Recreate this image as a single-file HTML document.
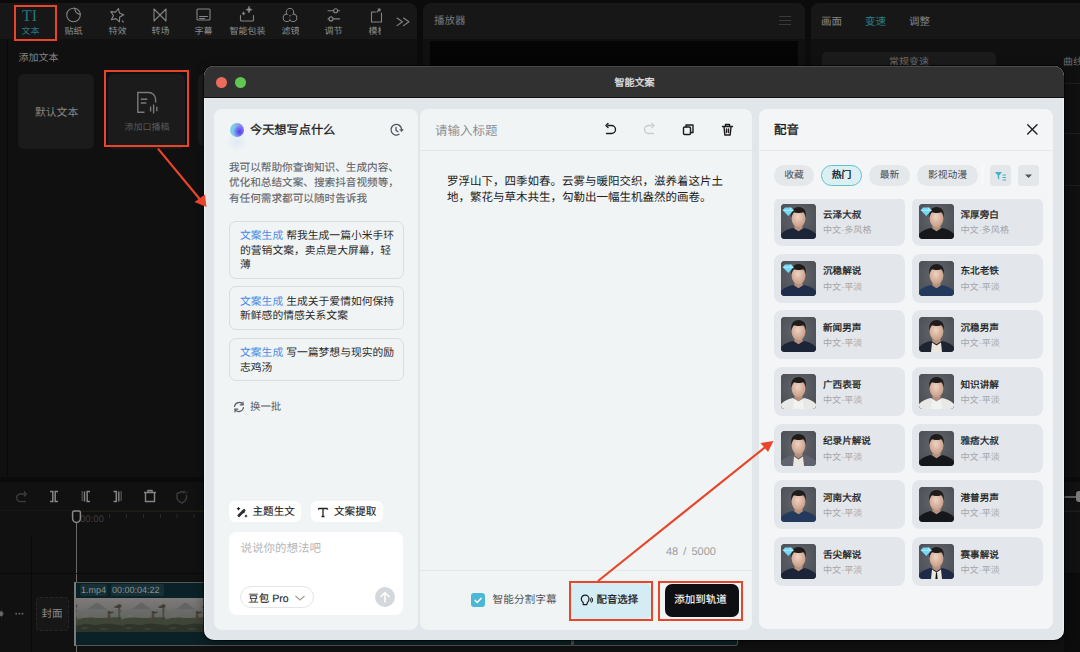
<!DOCTYPE html>
<html lang="zh-CN"><head><meta charset="utf-8">
<style>
*{margin:0;padding:0;box-sizing:border-box}
html,body{width:1080px;height:652px;overflow:hidden;background:#0b0b0b;font-family:"Liberation Sans",sans-serif;text-rendering:geometricPrecision}
.a{position:absolute}
.t{position:absolute;white-space:nowrap;line-height:1}
/* dark app */
.pnl{position:absolute;background:#161616;border-radius:8px}
.tb{color:#8e8e8e;font-size:9px;margin-top:.8px;margin-left:.5px}
.rb{position:absolute;border:2px solid #e8452a}
/* modal */
#modal{position:absolute;left:204px;top:66px;width:860px;height:574px;border-radius:10px;background:#e2e7ea;overflow:hidden}
#tbar{position:absolute;left:0;top:0;width:860px;height:31px;background:#313131;border-bottom:1px solid #141414}
.card{position:absolute;background:#f1f4f5;border-radius:8px}
.sug{position:absolute;left:228.5px;width:175px;border:1px solid #dadde1;border-radius:7px;font-size:10.8px;line-height:14.5px;color:#2a2a2a;padding:7.8px 0 0 10.5px}
.sug b{font-weight:normal;color:#4a8ce4}
.pill{position:absolute;height:21px;border-radius:11px;background:#e5e8eb;font-size:9.8px;color:#474c55;text-align:center;line-height:21px}
.vc{position:absolute;width:131px;height:49px;border-radius:8px;background:#e3e7eb}
.av{position:absolute;left:7px;top:7px;width:35px;height:35px;border-radius:4px;background:#4a4f58;overflow:hidden}
.vn{position:absolute;left:49px;top:12.5px;font-size:9.6px;color:#1a1a1a;-webkit-text-stroke:.28px #1a1a1a;white-space:nowrap;line-height:12px}
.vs{position:absolute;left:49px;top:27px;font-size:9.1px;color:#a3a6aa;white-space:nowrap;line-height:12px}
</style></head><body>
<!-- ============ DARK APP BACKGROUND ============ -->
<!-- left top panel -->
<div class="a" style="left:0;top:3px;width:417px;height:474px;border-radius:0 8px 8px 0;background:#101010"></div>
<div class="a" style="left:0;top:3px;width:417px;height:37px;background:#171717;border-radius:0 8px 0 0;border-bottom:1px solid #101010"></div>
<div class="a" style="left:7px;top:40px;width:1px;height:436px;background:#090909"></div>
<!-- toolbar -->
<svg class="a" style="left:0;top:0" width="417" height="40" fill="none" stroke-linecap="round" stroke-linejoin="round">
  <text x="22" y="20.5" font-family="Liberation Serif" font-size="16.5" fill="#24767d" stroke="none" textLength="15" lengthAdjust="spacingAndGlyphs">TI</text>
  <g stroke="#858585" stroke-width="1.1">
    <path d="M80.27 14.41A6.8 6.8 0 1 1 74.68 8.30"/><path d="M74.68 8.30C74.98 11.80 76.77 14.11 80.27 14.41"/><path d="M74.68 8.30C77.68 8.80 80.27 11.41 80.27 14.41"/>
    <path d="M118.49 8.51L119.40 13.11L123.78 14.81L119.68 17.10L119.42 21.79L115.98 18.60L111.44 19.80L113.41 15.54L110.86 11.59L115.53 12.15z" stroke-linejoin="round"/><path d="M122.2 20.8l1.2 1.2"/>
    <path d="M154 9v12l6-6zM166 9v12l-6-6z"/>
    <rect x="197" y="9" width="13" height="11" rx="1"/><path d="M199.5 16.5h8M199.5 18.5h5"/>
    <path d="M240.5 15.5v4.5a1 1 0 0 0 1 1h11a1 1 0 0 0 1-1v-4.5"/><path d="M249 6.5l.9 2.3 2.3.9-2.3.9-.9 2.3-.9-2.3-2.3-.9 2.3-.9z" fill="#8f8f8f" stroke-width=".6"/><path d="M243.5 11.8l.5 1.2 1.2.5-1.2.5-.5 1.2-.5-1.2-1.2-.5 1.2-.5z" fill="#8f8f8f" stroke-width=".5"/>
    <circle cx="290" cy="12.2" r="3.7"/><circle cx="286.9" cy="17.8" r="3.7"/><circle cx="293.1" cy="17.8" r="3.7"/><g fill="#171717" stroke="none"><circle cx="290" cy="12.2" r="3.1"/><circle cx="286.9" cy="17.8" r="3.1"/><circle cx="293.1" cy="17.8" r="3.1"/></g>
    <path d="M328 10.7h11.5M328 18.9h11.5"/><circle cx="335.6" cy="10.7" r="2" fill="#171717"/><circle cx="331" cy="18.9" r="2" fill="#171717"/>
    <path d="M371.5 12v10h10V13M371.5 12h4M377 12l3-3M378 9h2v2"/>
    <path d="M397 18l5.5 3.8-5.5 3.8M403.5 18l5.5 3.8-5.5 3.8"/>
  </g>
</svg>
<div class="t tb" style="left:21px;top:26px;color:#287a81">文本</div>
<div class="t tb" style="left:64px;top:26px">贴纸</div>
<div class="t tb" style="left:108px;top:26px">特效</div>
<div class="t tb" style="left:151px;top:26px">转场</div>
<div class="t tb" style="left:194px;top:26px">字幕</div>
<div class="t tb" style="left:229px;top:26px">智能包装</div>
<div class="t tb" style="left:281px;top:26px">滤镜</div>
<div class="t tb" style="left:324px;top:26px">调节</div>
<div class="a" style="left:368px;top:0;width:13px;height:39px;overflow:hidden"><div class="t tb" style="left:0;top:26px">模板</div></div>
<div class="rb" style="left:14px;top:5px;width:43px;height:36px"></div>
<div class="t" style="left:18.5px;top:54.4px;font-size:10px;color:#858585">添加文本</div>
<div class="a" style="left:18px;top:74px;width:76px;height:75px;background:#1b1b1b;border-radius:6px"></div>
<div class="t" style="left:35px;top:107.6px;font-size:10.8px;color:#858585">默认文本</div>
<div class="a" style="left:108px;top:74px;width:77px;height:75px;background:#1b1b1b;border-radius:6px"></div>
<svg class="a" style="left:136px;top:91px" width="24" height="24" fill="none" stroke="#7a7a7a" stroke-width="1.4"><path d="M8.5 21.2H1.8V1.5h11c3.6 0 6.8 3.2 6.8 6.8V11.5"/><path d="M4.8 8.2h6.5M4.8 12h5.5"/><path d="M14.6 15.5v5M17.6 13.5v9M20.8 15.8v4.4"/></svg>
<div class="t" style="left:124.5px;top:122.5px;font-size:9px;color:#5a5a5a">添加口播稿</div>
<div class="rb" style="left:104px;top:70px;width:85px;height:77px"></div>
<div class="a" style="left:198px;top:74px;width:10px;height:72px;background:#1b1b1b;border-radius:6px 0 0 6px"></div>

<!-- player panel -->
<div class="a" style="left:423px;top:3px;width:382px;height:474px;background:#101010;border-radius:8px"></div>
<div class="a" style="left:423px;top:3px;width:382px;height:37px;background:#171717;border-radius:8px 8px 0 0;border-bottom:1px solid #101010"></div>
<div class="t" style="left:434px;top:16.3px;font-size:10.5px;color:#777">播放器</div>
<svg class="a" style="left:778px;top:15px" width="14" height="11" stroke="#3a3a3a" stroke-width="1.2"><path d="M1 1.5h12M1 5.5h12M1 9.5h12"/></svg>
<div class="a" style="left:430px;top:41px;width:368px;height:436px;background:#050505"></div>

<!-- right panel -->
<div class="a" style="left:811px;top:3px;width:275px;height:474px;background:#101010;border-radius:8px 0 0 8px"></div>
<div class="a" style="left:811px;top:3px;width:275px;height:37px;background:#171717;border-radius:8px 0 0 0;border-bottom:1px solid #101010"></div>
<div class="t" style="left:821px;top:16.5px;font-size:10.5px;color:#858585">画面</div>
<div class="t" style="left:865px;top:16.5px;font-size:10.5px;color:#2a8088">变速</div>
<div class="t" style="left:909px;top:16.5px;font-size:10.5px;color:#858585">调整</div>
<div class="a" style="left:822px;top:52px;width:174px;height:30px;background:#1b1b1b;border-radius:5px"></div>
<div class="t" style="left:889px;top:58.3px;font-size:10px;color:#6a6a6a">常规变速</div>
<div class="t" style="left:1063px;top:58.3px;font-size:10px;color:#6a6a6a">曲线</div>
<div class="a" style="left:1000px;top:83px;width:80px;height:1px;background:#1e1e1e"></div>
<div class="a" style="left:1000px;top:132.5px;width:80px;height:1px;background:#1e1e1e"></div><div class="a" style="left:1000px;top:184.5px;width:80px;height:1px;background:#1c1c1c"></div>

<!-- timeline -->
<div class="a" style="left:0;top:482px;width:1080px;height:170px;background:#111111"></div>
<div class="a" style="left:0;top:510px;width:1080px;height:1px;background:#161616"></div>
<svg class="a" style="left:0;top:482px" width="210" height="28" fill="none" stroke="#858585" stroke-width="1.4">
  <path d="M26 12h-5.5a3.8 3.8 0 0 0 0 7.6H26" stroke="#3c3c3c"/><path d="M24 9.5l2.2 2.5-2.2 2.5" stroke="#3c3c3c"/>
  <path d="M50 9.5h2.8v10H50M58 9.5h-2.8v10H58" stroke-width="1.5"/>
  <path d="M82.2 9.5v10" stroke-dasharray="1 1"/><path d="M84.5 9.5v10"/><path d="M90 9.5h-2.8v10H90" stroke-width="1.5"/>
  <path d="M113.5 9.5h2.8v10h-2.8" stroke-width="1.5"/><path d="M118.8 9.5v10"/><path d="M121.2 9.5v10" stroke-dasharray="1 1"/>
  <path d="M144 10.5h12M145.5 11v8.5h9V11M148 10.3V8.5h4v1.8"/>
  <path d="M177 11.5l5-2 2.5 1M186.5 13v2.5c0 2.5-2.5 4.5-4.5 5.5-2-1-5-3-5-5.5V11.5" stroke="#3c3c3c"/>
  <text x="183" y="12" font-size="5" fill="#3c3c3c" stroke="none" font-family="Liberation Sans">AI</text>
</svg>
<div class="a" style="left:80px;top:511px;width:1000px;height:1px;background:#201f14"></div>
<div class="t" style="left:80px;top:515px;font-size:9.5px;color:#3e3e3e">00:00</div>
<svg class="a" style="left:100px;top:512px" width="110" height="8" stroke="#2a2a2a" stroke-width="1"><path d="M9.5 2v4M26.5 2v4M43.5 2v4M60.5 2v4M77 2v4M94 2v4"/></svg>
<div class="a" style="left:75.5px;top:520px;width:1px;height:132px;background:#6a6a6a"></div>
<svg class="a" style="left:71px;top:510px" width="11" height="14"><path d="M1.6 2.6a1.5 1.5 0 0 1 1.5-1.5h4.8a1.5 1.5 0 0 1 1.5 1.5v5.6c0 2.4-1.8 4.2-3.9 4.2s-3.9-1.8-3.9-4.2z" fill="#111" stroke="#8a8a8a" stroke-width="1.5"/></svg>
<div class="a" style="left:31px;top:535px;width:1px;height:117px;background:#090909"></div>
<div class="a" style="left:0;top:572.5px;width:1080px;height:1.5px;background:#090909"></div>
<svg class="a" style="left:0;top:606px" width="30" height="16"><g fill="#6e6e6e"><circle cx="16.2" cy="7.7" r=".9"/><circle cx="19.4" cy="7.7" r=".9"/><circle cx="22.5" cy="7.7" r=".9"/></g><path d="M0 5.5l1.5 0 1.5 2.2-1.5 2.2H0" fill="#6a6a6a"/><path d="M1.2 4.8c1.2.8 1.8 1.8 1.8 2.9s-.6 2.1-1.8 2.9" stroke="#6a6a6a" fill="none" stroke-width=".9"/></svg>
<div class="a" style="left:36px;top:597px;width:33px;height:34px;border:1px dashed #262626;border-radius:4px;background:#171717"></div>
<div class="t" style="left:41.5px;top:609.3px;font-size:10.5px;color:#8a8a8a">封面</div>
<!-- clip -->
<div class="a" style="left:74px;top:582px;width:664px;height:64px;background:#0a2227;border-radius:3px;border:1px solid #555;border-left:none"></div>
<div class="a" style="left:74px;top:582px;width:2px;height:64px;background:#7a7a7a"></div>
<div class="a" style="left:80px;top:584px;width:27px;height:12px;background:#173036;border-radius:2px"></div>
<div class="t" style="left:81px;top:586px;font-size:9px;color:#9ab"><span style="color:#879192">1.mp4</span></div>
<div class="a" style="left:111px;top:584px;width:53px;height:12px;background:#173036;border-radius:2px"></div>
<div class="t" style="left:112px;top:586px;font-size:9px;color:#879192">00:00:04:22</div>
<svg class="a" style="left:76px;top:598px" width="662" height="34">
<defs>
<linearGradient id="sky" x1="0" y1="0" x2="0" y2="1"><stop offset="0" stop-color="#7e7b7a"/><stop offset=".3" stop-color="#72716f"/><stop offset=".6" stop-color="#585b56"/><stop offset="1" stop-color="#363a31"/></linearGradient>
<pattern id="thumb" x="1.2" y="0" width="44.1" height="34" patternUnits="userSpaceOnUse">
<rect width="44.1" height="34" fill="url(#sky)"/>
<path d="M10 11.5C14 9 17 5.5 20 4.5c3 1 6 4.5 10 7z" fill="#5f6163" opacity=".85"/>
<path d="M0 14c6-2 14-2.5 22-.5s15 1 22.1-1v8H0z" fill="#6a6d68" opacity=".6"/>
<path d="M0 22c5-2.5 11-3 17-2.2 8 1 15-1.5 27.1-.3V34H0z" fill="#3f4637"/>
<path d="M0 28c5-2 9-3 14-1.5 5 1.5 10-1 16-1 6 0 10 2 14.1 1V34H0z" fill="#2e3429"/>
<path d="M3 30c3-1 6-1 9 0-3 1-6 1-9 0zM22 31c3-1 6-1 9 0-3 1-6 1-9 0z" fill="#5a4c42" opacity=".6"/>
<path d="M41.3 6h1.4l-.2 16h-1z" fill="#3a3530"/>
<path d="M36.5 9.5c2.5-2.5 6.5-3.5 10.5-2-2 2.2-7 3-10.5 2z" fill="#403a33"/>
<path d="M37 14c-2-1.2-4.5-.5-5.5 1.8 2.2.1 4.2-.6 5.5-1.8zM43 13c2-1.5 4-1.5 5 .5-2 .5-4 .3-5-.5z" fill="#36432f"/>
<path d="M30.8 14.5h1.8l.8 9h-3.4z" fill="#4a3f38"/>
<circle cx="31.7" cy="14" r="1" fill="#2e2a27"/>
<path d="M0 2c3 0 5 1 6 3-3 0-5-1-6-3zM34 1c3 .5 5 1.5 6 3-3-.3-5-1.3-6-3z" fill="#8a7276" opacity=".55"/>
<path d="M6 18c2-1 4-1 6 0-2 1-4 1-6 0z" fill="#85707a" opacity=".45"/>
</pattern>
</defs>
<rect width="662" height="34" fill="url(#thumb)"/>
</svg>
<div class="a" style="left:571px;top:636px;width:3px;height:10px;background:#4a4a4a;border-radius:1px"></div>
<!-- right strip -->
<div class="a" style="left:1064px;top:574px;width:16px;height:78px;background:#0c0c0c"></div>
<div class="a" style="left:1064px;top:511px;width:16px;height:1px;background:#1e1e1e"></div>
<div class="a" style="left:1064px;top:496px;width:12px;height:1.5px;background:#5a5a5a"></div>
<div class="a" style="left:1076px;top:491px;width:8px;height:11px;background:#7a7a7a;border-radius:3px"></div>

<!-- ============ MODAL ============ -->
<div class="a" style="left:204px;top:66px;width:860px;height:574px;border-radius:10px;background:#e0e6e9;overflow:hidden;box-shadow:0 0 0 1px rgba(0,0,0,.55),0 3px 12px rgba(0,0,0,.4),inset 1px 0 0 rgba(255,255,255,.45),inset -1px 0 0 rgba(255,255,255,.45)">
  <div class="a" style="left:0;top:0;width:860px;height:31.5px;background:#313131;border-bottom:1px solid #121212;box-shadow:inset 0 1px 0 #4a4a4a"></div>
  <div class="a" style="left:12px;top:10.5px;width:11px;height:11px;border-radius:50%;background:#ec6a5e"></div>
  <div class="a" style="left:31px;top:10.5px;width:11px;height:11px;border-radius:50%;background:#61c554"></div>
  <div class="t" style="left:410.5px;top:12.8px;font-size:10px;color:#e2e2e2;-webkit-text-stroke:.3px #e2e2e2">智能文案</div>
</div>
<!-- left panel -->
<div class="a" style="left:214px;top:109px;width:204px;height:521px;background:#f1f4f5;border-radius:8px"></div>
<div class="a" style="left:226px;top:132px;width:22px;height:20px;border-radius:50%;background:radial-gradient(ellipse at center,rgba(170,200,245,.25),rgba(170,200,245,0) 70%)"></div>
<div class="a" style="left:229.5px;top:123px;width:14px;height:14px;border-radius:50%;background:radial-gradient(circle at 68% 62%,#4f3cf2 0,rgba(95,80,242,.7) 22%,rgba(110,110,240,0) 50%),linear-gradient(90deg,#7ad6e4 0,#82c0ea 35%,#8a90f0 70%,#a57cf2 100%);filter:blur(.7px)"></div>
<div class="t" style="left:250px;top:123.5px;font-size:12.2px;color:#1b1b1b;-webkit-text-stroke:.3px #1b1b1b">今天想写点什么</div>
<svg class="a" style="left:389px;top:123px" width="16" height="14" fill="none" stroke="#4f545e" stroke-width="1.3" stroke-linecap="round"><path d="M10.05 11.3A5.3 5.3 0 1 1 12.6 6.2"/><path d="M11 6.6h3.3L12.65 8.6z" fill="#4f545e" stroke-width=".6" stroke-linejoin="round"/><path d="M7 4.3v3l2 1.4"/></svg>
<div class="a" style="left:229px;top:160.7px;font-size:10.64px;line-height:15.5px;color:#5f6368;width:190px;-webkit-text-stroke:.1px #5f6368">我可以帮助你查询知识、生成内容、<br>优化和总结文案、搜索抖音视频等，<br>有任何需求都可以随时告诉我</div>
<div class="sug" style="top:220.5px;height:58px">
  <b>文案生成</b> 帮我生成一篇小米手环<br>的营销文案，卖点是大屏幕，轻<br>薄</div>
<div class="sug" style="top:286px;height:43.5px"><b>文案生成</b> 生成关于爱情如何保持<br>新鲜感的情感关系文案</div>
<div class="sug" style="top:337.5px;height:43.5px"><b>文案生成</b> 写一篇梦想与现实的励<br>志鸡汤</div>
<svg class="a" style="left:232px;top:399.7px" width="14" height="14" fill="none" stroke="#575c66" stroke-width="1.2" stroke-linecap="round">
  <path d="M2.5 6.5A4.7 4.7 0 0 1 11 4.5"/><path d="M11.5 7.5A4.7 4.7 0 0 1 3 9.5"/><path d="M11 2v2.8H8.2M3 12V9.2h2.8"/>
</svg>
<div class="t" style="left:250px;top:403.2px;font-size:10.4px;color:#555a64">换一批</div>
<!-- bottom tools -->
<div class="a" style="left:229px;top:501px;width:72px;height:21px;background:#fff;border-radius:6px"></div>
<svg class="a" style="left:236px;top:506px" width="12" height="12" fill="none" stroke="#222" stroke-width="1.2" stroke-linecap="round" stroke-linejoin="round"><path d="M3 10.5l-1-1 6-6 1 1z"/><path d="M7 5.5l1 1"/><path d="M2.5 1.5v2.2M1.4 2.6h2.2M10 9.2v1.6M9.2 10h1.6"/></svg>
<div class="t" style="left:252.5px;top:507px;font-size:10.6px;color:#1b1b1b;-webkit-text-stroke:.12px #1b1b1b">主题生文</div>
<div class="a" style="left:311px;top:501px;width:72px;height:21px;background:#fff;border-radius:6px"></div>
<svg class="a" style="left:317px;top:506px" width="12" height="12" fill="none" stroke="#222" stroke-width="1.3"><path d="M1.5 2.5h9M6 2.5v8M1.5 2.5v1.2M10.5 2.5v1.2M4.5 10.5h3"/></svg>
<div class="t" style="left:334px;top:507px;font-size:10.6px;color:#1b1b1b;-webkit-text-stroke:.12px #1b1b1b">文案提取</div>
<div class="a" style="left:229px;top:532px;width:174px;height:83px;background:#fff;border-radius:8px"></div>
<div class="t" style="left:240.5px;top:544.3px;font-size:11.5px;color:#b3b6b9">说说你的想法吧</div>
<div class="a" style="left:240px;top:586px;width:74px;height:22px;border:1px solid #e3e5e8;border-radius:11px;background:#fff"></div>
<div class="t" style="left:248.3px;top:593.8px;font-size:10.5px;color:#1b1b1b;-webkit-text-stroke:.12px #1b1b1b">豆包 Pro</div>
<svg class="a" style="left:294px;top:594px" width="12" height="8" fill="none" stroke="#9a9a9a" stroke-width="1.1"><path d="M1.5 2l4.5 4 4.5-4"/></svg>
<div class="a" style="left:375px;top:587px;width:20px;height:20px;border-radius:50%;background:#d4d7db"></div>
<svg class="a" style="left:375px;top:587px" width="20" height="20" fill="none" stroke="#fff" stroke-width="1.5" stroke-linecap="round"><path d="M10 15V5.5M6 9.5l4-4 4 4"/></svg>

<!-- middle panel -->
<div class="a" style="left:420px;top:109px;width:332px;height:521px;background:#f1f4f5;border-radius:8px"></div>
<div class="a" style="left:420px;top:150px;width:332px;height:1px;background:#e4e7e9"></div>
<div class="t" style="left:435px;top:124.7px;font-size:12.5px;color:#8c8f92">请输入标题</div>
<svg class="a" style="left:600px;top:120px" width="140" height="20" fill="none" stroke-width="1.4" stroke-linecap="round" stroke-linejoin="round">
  <g stroke="#1b1b1b"><path d="M8 5.5h3.5a4 4 0 0 1 0 8H6.5"/><path d="M8 3.5l-2 2 2 2"/></g>
  <g stroke="#c9ccd0"><path d="M52 5.5h-3.5a4 4 0 0 0 0 8H53.5"/><path d="M52 3.5l2 2-2 2"/></g>
  <g stroke="#1b1b1b"><rect x="83.5" y="7" width="7" height="7.5" rx="1"/><path d="M86 7V5h7v7.5h-2.5"/></g>
  <g stroke="#1b1b1b"><path d="M122.5 6.5h10M124 6.5l.8 8.5h5.4l.8-8.5M125.5 6.5V4.5h4v2M126.5 9v3.5M128.5 9v3.5"/></g>
</svg>
<div class="a" style="left:447px;top:174.3px;font-size:11.5px;line-height:16px;color:#202020;width:300px">罗浮山下，四季如春。云雾与暖阳交织，滋养着这片土<br>地，繁花与草木共生，勾勒出一幅生机盎然的画卷。</div>
<div class="t" style="left:666px;top:547px;font-size:11px;color:#9a9da0;word-spacing:2px">48 / 5000</div>
<div class="a" style="left:420px;top:570px;width:332px;height:1px;background:#e4e7e9"></div>
<div class="a" style="left:471px;top:593px;width:14px;height:14px;border-radius:3px;background:#4cb8d6"></div>
<svg class="a" style="left:471px;top:593px" width="14" height="14" fill="none" stroke="#fff" stroke-width="1.4" stroke-linecap="round" stroke-linejoin="round"><path d="M4 7.2l2.2 2.2 4-4.2"/></svg>
<div class="t" style="left:492.5px;top:595px;font-size:10.7px;color:#555">智能分割字幕</div>
<div class="a" style="left:571px;top:583px;width:80px;height:35.5px;background:#d4ecf3;border-radius:6px"></div>
<svg class="a" style="left:579px;top:593px" width="16" height="14" fill="none" stroke="#1b1b1b" stroke-width="1.2" stroke-linejoin="round"><path d="M4.2 11.6V9.6C3 8.8 2.3 7.5 2.3 6a3.85 3.85 0 1 1 7.7 0c0 1.7-.6 2.8-1.6 3.6l-.6 2z"/><ellipse cx="12.6" cy="7" rx=".9" ry="2.3" stroke-width="1"/></svg>
<div class="t" style="left:596.5px;top:595.5px;font-size:10.4px;color:#111;-webkit-text-stroke:.2px #111">配音选择</div>
<div class="rb" style="left:569px;top:581px;width:84px;height:40px"></div>
<div class="a" style="left:664.5px;top:583.5px;width:74px;height:33px;background:#0e0f12;border-radius:7px"></div>
<div class="t" style="left:674.3px;top:595px;font-size:10.5px;color:#fff;-webkit-text-stroke:.1px #fff">添加到轨道</div>
<div class="rb" style="left:658px;top:581px;width:85px;height:40px"></div>

<!-- right panel -->
<div class="a" style="left:759px;top:109px;width:294px;height:520px;background:#f4f5f7;border-radius:8px;overflow:hidden"></div>
<div class="a" style="left:759px;top:150px;width:294px;height:1px;background:#e6e8ea"></div>
<div class="t" style="left:774px;top:124px;font-size:12.5px;color:#1b1b1b;-webkit-text-stroke:.35px #1b1b1b">配音</div>
<svg class="a" style="left:1025px;top:123px" width="14" height="14" stroke="#222" stroke-width="1.4" stroke-linecap="round"><path d="M2.7 1.7l9.3 9.3M12 1.7L2.7 11"/></svg>
<div class="pill" style="left:774px;top:165px;width:40px">收藏</div>
<div class="pill" style="left:821px;top:165px;width:41px;background:#dcf0f4;border:1px solid #5fc0d0;line-height:19px;color:#111;-webkit-text-stroke:.35px #111">热门</div>
<div class="pill" style="left:869px;top:165px;width:41px">最新</div>
<div class="pill" style="left:917px;top:165px;width:61px">影视动漫</div>
<div class="a" style="left:981.5px;top:165px;width:1.5px;height:21px;background:#fbfcfd"></div>
<div class="a" style="left:990px;top:165px;width:21px;height:21px;border-radius:4px;background:#e3e7ea"></div>
<svg class="a" style="left:990px;top:165px" width="21" height="21"><path d="M5 7h7l-2.8 3.5v4l-1.4-1v-3z" fill="#3fb3c8"/><path d="M12.5 10h3.5M12.5 12.5h3.5M12.5 15h3.5" stroke="#3fb3c8" stroke-width="1"/></svg>
<div class="a" style="left:1018px;top:165px;width:21px;height:21px;border-radius:4px;background:#e3e7ea"></div>
<svg class="a" style="left:1018px;top:165px" width="21" height="21"><path d="M7 9.5h7l-3.5 3.5z" fill="#555"/></svg>

<svg width="0" height="0" style="position:absolute"><defs><radialGradient id="avbg" cx="50%" cy="40%" r="70%"><stop offset="0" stop-color="#63666d"/><stop offset="1" stop-color="#4a4d54"/></radialGradient><radialGradient id="skin" cx="45%" cy="40%" r="60%"><stop offset="0" stop-color="#efd3c3"/><stop offset="1" stop-color="#c79d86"/></radialGradient></defs></svg>
<div class="a" style="left:759px;top:199px;width:294px;height:430px;overflow:hidden">
<div class="vc" style="left:15.0px;top:-2.00px"><div class="av"><svg width="35" height="35"><rect width="35" height="35" fill="url(#avbg)"/><path d="M0 35V30c3-3.5 8-5 12-6l5.5 3 5.5-3c4 1 9 2.5 12 6v5z" fill="#1c2438"/><path d="M13.5 19h8v5.5l-4 2.8-4-2.8z" fill="#b8917c"/><ellipse cx="17.5" cy="14.6" rx="6.9" ry="8.7" fill="url(#skin)"/><path d="M10.3 13.5C9.6 6.3 12.8 3 17.6 3s8.1 3.3 7.2 10.5c-.4-3-1.2-4.9-2.4-5.3-2.2 1-7.2 1-9.4 0-1.1.6-1.9 2.3-2.7 5.3z" fill="#1f1c1b"/><path d="M4 3.5h6.5l2.2 2.8-5.45 5.7-5.45-5.7z" fill="#74d9f7"/><path d="M1.8 6.3h10.9" stroke="#c8f2ff" stroke-width=".7"/><path d="M9 3.5l1.3 2.8" stroke="#fff" stroke-width=".6" opacity=".8"/></svg></div><div class="vn">云泽大叔</div><div class="vs">中文·多风格</div></div>
<div class="vc" style="left:152.5px;top:-2.00px"><div class="av"><svg width="35" height="35"><rect width="35" height="35" fill="url(#avbg)"/><path d="M0 35V30c3-3.5 8-5 12-6l5.5 3 5.5-3c4 1 9 2.5 12 6v5z" fill="#16171a"/><path d="M13.5 19h8v5.5l-4 2.8-4-2.8z" fill="#b8917c"/><ellipse cx="17.5" cy="14.6" rx="6.9" ry="8.7" fill="url(#skin)"/><path d="M10.3 13.5C9.6 6.3 12.8 3 17.6 3s8.1 3.3 7.2 10.5c-.4-3-1.2-4.9-2.4-5.3-2.2 1-7.2 1-9.4 0-1.1.6-1.9 2.3-2.7 5.3z" fill="#1f1c1b"/><path d="M4 3.5h6.5l2.2 2.8-5.45 5.7-5.45-5.7z" fill="#74d9f7"/><path d="M1.8 6.3h10.9" stroke="#c8f2ff" stroke-width=".7"/><path d="M9 3.5l1.3 2.8" stroke="#fff" stroke-width=".6" opacity=".8"/></svg></div><div class="vn">浑厚旁白</div><div class="vs">中文·多风格</div></div>
<div class="vc" style="left:15.0px;top:54.67px"><div class="av"><svg width="35" height="35"><rect width="35" height="35" fill="url(#avbg)"/><path d="M0 35V30c3-3.5 8-5 12-6l5.5 3 5.5-3c4 1 9 2.5 12 6v5z" fill="#1f2c4a"/><path d="M13.5 19h8v5.5l-4 2.8-4-2.8z" fill="#b8917c"/><ellipse cx="17.5" cy="14.6" rx="6.9" ry="8.7" fill="url(#skin)"/><path d="M10.3 13.5C9.6 6.3 12.8 3 17.6 3s8.1 3.3 7.2 10.5c-.4-3-1.2-4.9-2.4-5.3-2.2 1-7.2 1-9.4 0-1.1.6-1.9 2.3-2.7 5.3z" fill="#1f1c1b"/><path d="M4 3.5h6.5l2.2 2.8-5.45 5.7-5.45-5.7z" fill="#74d9f7"/><path d="M1.8 6.3h10.9" stroke="#c8f2ff" stroke-width=".7"/><path d="M9 3.5l1.3 2.8" stroke="#fff" stroke-width=".6" opacity=".8"/></svg></div><div class="vn">沉稳解说</div><div class="vs">中文·平淡</div></div>
<div class="vc" style="left:152.5px;top:54.67px"><div class="av"><svg width="35" height="35"><rect width="35" height="35" fill="url(#avbg)"/><path d="M0 35V30c3-3.5 8-5 12-6l5.5 3 5.5-3c4 1 9 2.5 12 6v5z" fill="#233a5c"/><path d="M13.5 19h8v5.5l-4 2.8-4-2.8z" fill="#b8917c"/><ellipse cx="17.5" cy="14.6" rx="6.9" ry="8.7" fill="url(#skin)"/><path d="M10.3 13.5C9.6 6.3 12.8 3 17.6 3s8.1 3.3 7.2 10.5c-.4-3-1.2-4.9-2.4-5.3-2.2 1-7.2 1-9.4 0-1.1.6-1.9 2.3-2.7 5.3z" fill="#1f1c1b"/></svg></div><div class="vn">东北老铁</div><div class="vs">中文·平淡</div></div>
<div class="vc" style="left:15.0px;top:111.34px"><div class="av"><svg width="35" height="35"><rect width="35" height="35" fill="url(#avbg)"/><path d="M0 35V30c3-3.5 8-5 12-6l5.5 3 5.5-3c4 1 9 2.5 12 6v5z" fill="#1c2438"/><path d="M13.5 19h8v5.5l-4 2.8-4-2.8z" fill="#b8917c"/><ellipse cx="17.5" cy="14.6" rx="6.9" ry="8.7" fill="url(#skin)"/><path d="M10.3 13.5C9.6 6.3 12.8 3 17.6 3s8.1 3.3 7.2 10.5c-.4-3-1.2-4.9-2.4-5.3-2.2 1-7.2 1-9.4 0-1.1.6-1.9 2.3-2.7 5.3z" fill="#1f1c1b"/></svg></div><div class="vn">新闻男声</div><div class="vs">中文·平淡</div></div>
<div class="vc" style="left:152.5px;top:111.34px"><div class="av"><svg width="35" height="35"><rect width="35" height="35" fill="url(#avbg)"/><path d="M0 35V30c3-3.5 8-5 12-6l5.5 3 5.5-3c4 1 9 2.5 12 6v5z" fill="#1d2330"/><path d="M13.5 19h8v5.5l-4 2.8-4-2.8z" fill="#b8917c"/><path d="M13 25.5l4.5 3 4.5-3 1 9.5h-11z" fill="#ece6de"/><ellipse cx="17.5" cy="14.6" rx="6.9" ry="8.7" fill="url(#skin)"/><path d="M10.3 13.5C9.6 6.3 12.8 3 17.6 3s8.1 3.3 7.2 10.5c-.4-3-1.2-4.9-2.4-5.3-2.2 1-7.2 1-9.4 0-1.1.6-1.9 2.3-2.7 5.3z" fill="#1f1c1b"/></svg></div><div class="vn">沉稳男声</div><div class="vs">中文·平淡</div></div>
<div class="vc" style="left:15.0px;top:168.01px"><div class="av"><svg width="35" height="35"><rect width="35" height="35" fill="url(#avbg)"/><path d="M0 35V30c3-3.5 8-5 12-6l5.5 3 5.5-3c4 1 9 2.5 12 6v5z" fill="#e8e8e6"/><path d="M13.5 19h8v5.5l-4 2.8-4-2.8z" fill="#b8917c"/><path d="M13 25.5l4.5 3 4.5-3 1 9.5h-11z" fill="#f2f2f0"/><ellipse cx="17.5" cy="14.6" rx="6.9" ry="8.7" fill="url(#skin)"/><path d="M10.3 13.5C9.6 6.3 12.8 3 17.6 3s8.1 3.3 7.2 10.5c-.4-3-1.2-4.9-2.4-5.3-2.2 1-7.2 1-9.4 0-1.1.6-1.9 2.3-2.7 5.3z" fill="#1f1c1b"/></svg></div><div class="vn">广西表哥</div><div class="vs">中文·平淡</div></div>
<div class="vc" style="left:152.5px;top:168.01px"><div class="av"><svg width="35" height="35"><rect width="35" height="35" fill="url(#avbg)"/><path d="M0 35V30c3-3.5 8-5 12-6l5.5 3 5.5-3c4 1 9 2.5 12 6v5z" fill="#e8e8e6"/><path d="M13.5 19h8v5.5l-4 2.8-4-2.8z" fill="#b8917c"/><path d="M13 25.5l4.5 3 4.5-3 1 9.5h-11z" fill="#f2f2f0"/><ellipse cx="17.5" cy="14.6" rx="6.9" ry="8.7" fill="url(#skin)"/><path d="M10.3 13.5C9.6 6.3 12.8 3 17.6 3s8.1 3.3 7.2 10.5c-.4-3-1.2-4.9-2.4-5.3-2.2 1-7.2 1-9.4 0-1.1.6-1.9 2.3-2.7 5.3z" fill="#1f1c1b"/></svg></div><div class="vn">知识讲解</div><div class="vs">中文·平淡</div></div>
<div class="vc" style="left:15.0px;top:224.68px"><div class="av"><svg width="35" height="35"><rect width="35" height="35" fill="url(#avbg)"/><path d="M0 35V30c3-3.5 8-5 12-6l5.5 3 5.5-3c4 1 9 2.5 12 6v5z" fill="#5f6470"/><path d="M13.5 19h8v5.5l-4 2.8-4-2.8z" fill="#b8917c"/><path d="M13 25.5l4.5 3 4.5-3 1 9.5h-11z" fill="#ece6de"/><ellipse cx="17.5" cy="14.6" rx="6.9" ry="8.7" fill="url(#skin)"/><path d="M10.3 13.5C9.6 6.3 12.8 3 17.6 3s8.1 3.3 7.2 10.5c-.4-3-1.2-4.9-2.4-5.3-2.2 1-7.2 1-9.4 0-1.1.6-1.9 2.3-2.7 5.3z" fill="#1f1c1b"/></svg></div><div class="vn">纪录片解说</div><div class="vs">中文·平淡</div></div>
<div class="vc" style="left:152.5px;top:224.68px"><div class="av"><svg width="35" height="35"><rect width="35" height="35" fill="url(#avbg)"/><path d="M0 35V30c3-3.5 8-5 12-6l5.5 3 5.5-3c4 1 9 2.5 12 6v5z" fill="#16171a"/><path d="M13.5 19h8v5.5l-4 2.8-4-2.8z" fill="#b8917c"/><ellipse cx="17.5" cy="14.6" rx="6.9" ry="8.7" fill="url(#skin)"/><path d="M10.3 13.5C9.6 6.3 12.8 3 17.6 3s8.1 3.3 7.2 10.5c-.4-3-1.2-4.9-2.4-5.3-2.2 1-7.2 1-9.4 0-1.1.6-1.9 2.3-2.7 5.3z" fill="#1f1c1b"/></svg></div><div class="vn">雅痞大叔</div><div class="vs">中文·平淡</div></div>
<div class="vc" style="left:15.0px;top:281.35px"><div class="av"><svg width="35" height="35"><rect width="35" height="35" fill="url(#avbg)"/><path d="M0 35V30c3-3.5 8-5 12-6l5.5 3 5.5-3c4 1 9 2.5 12 6v5z" fill="#233a5c"/><path d="M13.5 19h8v5.5l-4 2.8-4-2.8z" fill="#b8917c"/><ellipse cx="17.5" cy="14.6" rx="6.9" ry="8.7" fill="url(#skin)"/><path d="M10.3 13.5C9.6 6.3 12.8 3 17.6 3s8.1 3.3 7.2 10.5c-.4-3-1.2-4.9-2.4-5.3-2.2 1-7.2 1-9.4 0-1.1.6-1.9 2.3-2.7 5.3z" fill="#1f1c1b"/></svg></div><div class="vn">河南大叔</div><div class="vs">中文·平淡</div></div>
<div class="vc" style="left:152.5px;top:281.35px"><div class="av"><svg width="35" height="35"><rect width="35" height="35" fill="url(#avbg)"/><path d="M0 35V30c3-3.5 8-5 12-6l5.5 3 5.5-3c4 1 9 2.5 12 6v5z" fill="#16171a"/><path d="M13.5 19h8v5.5l-4 2.8-4-2.8z" fill="#b8917c"/><ellipse cx="17.5" cy="14.6" rx="6.9" ry="8.7" fill="url(#skin)"/><path d="M10.3 13.5C9.6 6.3 12.8 3 17.6 3s8.1 3.3 7.2 10.5c-.4-3-1.2-4.9-2.4-5.3-2.2 1-7.2 1-9.4 0-1.1.6-1.9 2.3-2.7 5.3z" fill="#1f1c1b"/></svg></div><div class="vn">港普男声</div><div class="vs">中文·平淡</div></div>
<div class="vc" style="left:15.0px;top:338.02px"><div class="av"><svg width="35" height="35"><rect width="35" height="35" fill="url(#avbg)"/><path d="M0 35V30c3-3.5 8-5 12-6l5.5 3 5.5-3c4 1 9 2.5 12 6v5z" fill="#1c2438"/><path d="M13.5 19h8v5.5l-4 2.8-4-2.8z" fill="#b8917c"/><ellipse cx="17.5" cy="14.6" rx="6.9" ry="8.7" fill="url(#skin)"/><path d="M10.3 13.5C9.6 6.3 12.8 3 17.6 3s8.1 3.3 7.2 10.5c-.4-3-1.2-4.9-2.4-5.3-2.2 1-7.2 1-9.4 0-1.1.6-1.9 2.3-2.7 5.3z" fill="#1f1c1b"/><path d="M4 3.5h6.5l2.2 2.8-5.45 5.7-5.45-5.7z" fill="#74d9f7"/><path d="M1.8 6.3h10.9" stroke="#c8f2ff" stroke-width=".7"/><path d="M9 3.5l1.3 2.8" stroke="#fff" stroke-width=".6" opacity=".8"/></svg></div><div class="vn">舌尖解说</div><div class="vs">中文·平淡</div></div>
<div class="vc" style="left:152.5px;top:338.02px"><div class="av"><svg width="35" height="35"><rect width="35" height="35" fill="url(#avbg)"/><path d="M0 35V30c3-3.5 8-5 12-6l5.5 3 5.5-3c4 1 9 2.5 12 6v5z" fill="#1e2a48"/><path d="M13.5 19h8v5.5l-4 2.8-4-2.8z" fill="#b8917c"/><path d="M13 25.5l4.5 3 4.5-3 1 9.5h-11z" fill="#ece6de"/><path d="M17 28.5h1l.6 6.5h-2.2z" fill="#111"/><ellipse cx="17.5" cy="14.6" rx="6.9" ry="8.7" fill="url(#skin)"/><path d="M10.3 13.5C9.6 6.3 12.8 3 17.6 3s8.1 3.3 7.2 10.5c-.4-3-1.2-4.9-2.4-5.3-2.2 1-7.2 1-9.4 0-1.1.6-1.9 2.3-2.7 5.3z" fill="#1f1c1b"/><path d="M4 3.5h6.5l2.2 2.8-5.45 5.7-5.45-5.7z" fill="#74d9f7"/><path d="M1.8 6.3h10.9" stroke="#c8f2ff" stroke-width=".7"/><path d="M9 3.5l1.3 2.8" stroke="#fff" stroke-width=".6" opacity=".8"/></svg></div><div class="vn">赛事解说</div><div class="vs">中文·平淡</div></div>
</div>
<svg class="a" style="left:0;top:0;pointer-events:none" width="1080" height="652">
<path d="M158 148.6L200.5 200" stroke="#e8452a" stroke-width="2.2"/>
<path d="M206.5 207L194.5 202L205 194.5z" fill="#e8452a"/>
<path d="M598 581L766 446.5" stroke="#e8452a" stroke-width="2.2"/>
<path d="M773.5 441L760.5 443L768 452z" fill="#e8452a"/>
</svg>
</body></html>
